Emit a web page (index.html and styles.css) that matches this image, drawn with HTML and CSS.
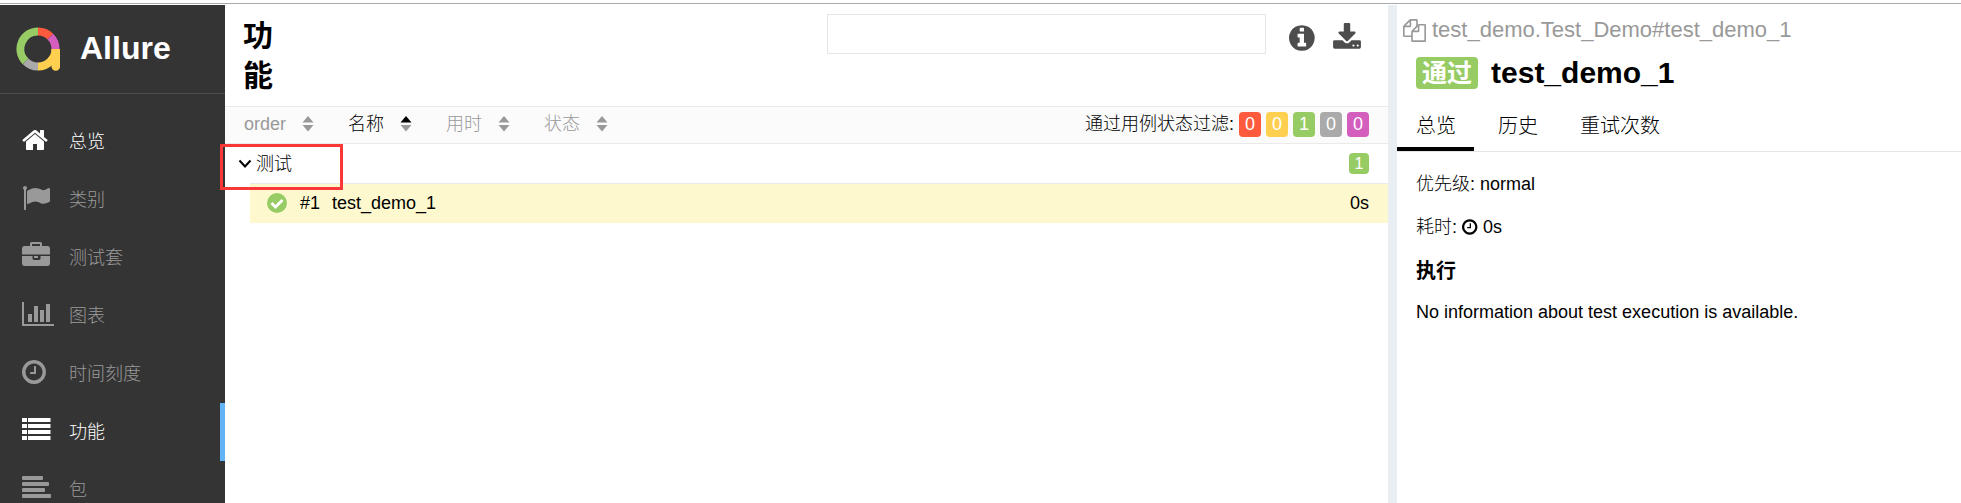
FILE: index.html
```html
<!DOCTYPE html>
<html lang="zh-CN">
<head>
<meta charset="utf-8">
<title>Allure</title>
<link rel="stylesheet" href="styles.css">
</head>
<body>
<svg class="defs" width="0" height="0" aria-hidden="true">
  <symbol id="clock" viewBox="128 0 1792 1792"><path d="M1024 544v448q0 14-9 23t-23 9h-320q-14 0-23-9t-9-23v-64q0-14 9-23t23-9h224v-352q0-14 9-23t23-9h64q14 0 23 9t9 23zm416 352q0-148-73-273t-198-198-273-73-273 73-198 198-73 273 73 273 198 198 273 73 273-73 198-198 73-273zm224 0q0 209-103 385.5t-279.5 279.5-385.5 103-385.5-103-279.5-279.5-103-385.5 103-385.5 279.5-279.5 385.5-103 385.5 103 279.5 279.5 103 385.5z"/></symbol>
  <symbol id="sort" viewBox="0 0 12 16"><path class="sort-up" d="M6 0l5.500 6.500h-11z"/><path d="M6 15.500l5.500-6.500h-11z"/></symbol>
</svg>
<div class="topline"></div>
<div class="app">
  <aside class="side">
    <a class="brand" href="#">
      <svg class="logo" viewBox="0 0 44 44" aria-hidden="true">
        <g fill="none" stroke-width="8">
          <path stroke="#97cc64" d="M9.600 34.400A17.500 17.500 0 0 1 22 4.500"/>
          <path stroke="#fd5a3e" d="M22 4.500A17.500 17.500 0 0 1 34.400 9.600"/>
          <path stroke="#d35ebe" d="M34.400 9.600A17.500 17.500 0 0 1 39.500 22"/>
          <path stroke="#ffd050" d="M39.500 22A17.500 17.500 0 0 1 22 39.500"/>
          <path stroke="#aaa" d="M22 39.500A17.500 17.500 0 0 1 9.600 34.400"/>
        </g>
        <path fill="#ffd050" d="M35.500 22H44V39.500a4 4 0 0 1-8.500 0z"/>
      </svg>
      <span>Allure</span>
    </a>
    <nav class="nav">
      <a class="nav-item lit" href="#"><svg class="nav-icon" viewBox="64 0 1792 1792"><path d="M1472 992v480q0 26-19 45t-45 19h-384v-384h-256v384h-384q-26 0-45-19t-19-45v-480q0-1 .5-3t.5-3l575-474 575 474q1 2 1 6zm223-69l-62 74q-8 9-21 11h-3q-13 0-21-7l-692-577-692 577q-12 8-24 7-13-2-21-11l-62-74q-8-10-7-23.5t11-21.5l719-599q32-26 76-26t76 26l244 204v-195q0-14 9-23t23-9h192q14 0 23 9t9 23v408l219 182q10 8 11 21.5t-7 23.5z"/></svg><span>总览</span></a>
      <a class="nav-item" href="#"><svg class="nav-icon" viewBox="0 0 1792 1792"><path d="M320 256q0 72-64 110v1266q0 13-9.5 22.5t-22.5 9.5h-64q-13 0-22.5-9.5t-9.5-22.5v-1266q-64-38-64-110 0-53 37.5-90.5t90.5-37.5 90.5 37.5 37.5 90.5zm1472 64v763q0 25-12.5 38.5t-39.5 27.5q-215 116-369 116-61 0-123.5-22t-108.5-48-115.5-48-142.5-22q-192 0-464 146-17 9-33 9-26 0-45-19t-19-45v-742q0-32 31-55 21-14 79-43 236-120 421-120 107 0 200 29t219 88q38 19 88 19 54 0 117.5-21t110-47 88-47 54.5-21q26 0 45 19t19 45z"/></svg><span>类别</span></a>
      <a class="nav-item" href="#"><svg class="nav-icon" viewBox="0 0 1792 1792"><path d="M640 256h512v-128h-512v128zm1152 640v480q0 66-47 113t-113 47h-1472q-66 0-113-47t-47-113v-480h672v160q0 40 28 68t68 28h320q40 0 68-28t28-68v-160h672zm-768 0v128h-256v-128h256zm768-480v384h-1792v-384q0-66 47-113t113-47h352v-160q0-40 28-68t68-28h576q40 0 68 28t28 68v160h352q66 0 113 47t47 113z"/></svg><span>测试套</span></a>
      <a class="nav-item" href="#"><svg class="nav-icon" viewBox="0 0 1792 1792"><path d="M640 896v512h-256v-512h256zm384-512v1024h-256v-1024h256zm1024 1152v128h-2048v-1536h128v1408h1920zm-640-896v768h-256v-768h256zm384-384v1152h-256v-1152h256z"/></svg><span>图表</span></a>
      <a class="nav-item" href="#"><svg class="nav-icon"><use href="#clock"/></svg><span>时间刻度</span></a>
      <a class="nav-item lit current" href="#"><svg class="nav-icon" viewBox="0 0 28 28"><path d="M0 2h5v4H0zM6 2h22.500v4H6zM0 8h5v4H0zM6 8h22.500v4H6zM0 14h5v4H0zM6 14h22.500v4H6zM0 20h5v4H0zM6 20h22.500v4H6z"/></svg><span>功能</span></a>
      <a class="nav-item" href="#"><svg class="nav-icon" viewBox="0 0 28 28"><rect y="2" width="21" height="4" rx="1"/><rect y="8" width="27" height="4" rx="1"/><rect y="14" width="23" height="4" rx="1"/><rect y="20" width="29" height="4" rx="1"/></svg><span>包</span></a>
    </nav>
  </aside>

  <main class="tree">
    <header class="tree-head">
      <h1 class="tree-title">功能</h1>
      <div class="tools">
        <input class="search" type="text" aria-label="搜索">
        <button class="tool" type="button" aria-label="信息"><svg viewBox="128 0 1792 1792"><path d="M1152 1376v-160q0-14-9-23t-23-9h-96v-512q0-14-9-23t-23-9h-320q-14 0-23 9t-9 23v160q0 14 9 23t23 9h96v320h-96q-14 0-23 9t-9 23v160q0 14 9 23t23 9h448q14 0 23-9t9-23zm-128-896v-160q0-14-9-23t-23-9h-192q-14 0-23 9t-9 23v160q0 14 9 23t23 9h192q14 0 23-9t9-23zm640 416q0 209-103 385.5t-279.5 279.5-385.5 103-385.5-103-279.5-279.5-103-385.5 103-385.5 279.5-279.5 385.5-103 385.5 103 279.5 279.5 103 385.5z"/></svg></button>
        <button class="tool" type="button" aria-label="下载"><svg viewBox="0 0 1792 1792"><path d="M1344 1344q0-26-19-45t-45-19-45 19-19 45 19 45 45 19 45-19 19-45zm256 0q0-26-19-45t-45-19-45 19-19 45 19 45 45 19 45-19 19-45zm128-224v320q0 40-28 68t-68 28h-1472q-40 0-68-28t-28-68v-320q0-40 28-68t68-28h465l135 136q58 56 136 56t136-56l136-136h464q40 0 68 28t28 68zm-325-569q17 41-14 70l-448 448q-18 19-45 19t-45-19l-448-448q-31-29-14-70 17-39 59-39h256v-448q0-26 19-45t45-19h256q26 0 45 19t19 45v448h256q42 0 59 39z"/></svg></button>
      </div>
    </header>
    <div class="bar">
      <div class="sorters">
        <button class="sorter" type="button">order <svg><use href="#sort"/></svg></button>
        <button class="sorter sorted" type="button">名称 <svg><use href="#sort"/></svg></button>
        <button class="sorter" type="button">用时 <svg><use href="#sort"/></svg></button>
        <button class="sorter" type="button">状态 <svg><use href="#sort"/></svg></button>
      </div>
      <div class="filter">
        <span>通过用例状态过滤:</span>
        <button class="mark failed" type="button">0</button>
        <button class="mark broken" type="button">0</button>
        <button class="mark passed" type="button">1</button>
        <button class="mark skipped" type="button">0</button>
        <button class="mark unknown" type="button">0</button>
      </div>
    </div>
    <div class="group">
      <svg class="chevron" viewBox="0 0 14 10" aria-hidden="true"><path d="M1.500 1.500L7 7.500l5.500-6"/></svg>
      <span class="group-name">测试</span>
      <span class="count passed">1</span>
      <div class="highlight"></div>
    </div>
    <a class="case" href="#">
      <svg class="check" viewBox="0 0 20 20" aria-hidden="true"><circle cx="10" cy="10" r="10" fill="#97cc64"/><path d="M4.500 10l4 4 7-7" fill="none" stroke="#fff" stroke-width="3"/></svg>
      <span class="case-order">#1</span>
      <span>test_demo_1</span>
      <span class="case-time">0s</span>
    </a>
  </main>

  <div class="gutter"></div>

  <section class="detail">
    <div class="fullname">
      <svg viewBox="0 0 1792 1792" aria-hidden="true"><path d="M1696 384q40 0 68 28t28 68v1216q0 40-28 68t-68 28h-960q-40 0-68-28t-28-68v-288h-544q-40 0-68-28t-28-68v-672q0-40 20-88t48-76l408-408q28-28 76-48t88-20h416q40 0 68 28t28 68v328q68-40 128-40h416zm-544 213l-299 299h299v-299zm-640-384l-299 299h299v-299zm196 647l316-316v-416h-384v416q0 40-28 68t-68 28h-416v640h512v-256q0-40 20-88t48-76zm956 804v-1152h-384v416q0 40-28 68t-68 28h-416v640h896z"/></svg>
      <span>test_demo.Test_Demo#test_demo_1</span>
    </div>
    <h2 class="case-title"><span class="status passed">通过</span><span>test_demo_1</span></h2>
    <nav class="tabs">
      <a class="tab active" href="#">总览</a>
      <a class="tab" href="#">历史</a>
      <a class="tab" href="#">重试次数</a>
    </nav>
    <div class="info">
      <p>优先级: normal</p>
      <p>耗时: <svg class="inline-clock"><use href="#clock"/></svg>0s</p>
      <h3>执行</h3>
      <p>No information about test execution is available.</p>
    </div>
  </section>
</div>
</body>
</html>
```
FILE: styles.css
```css
* { box-sizing: border-box; }

body {
  margin: 0;
  height: 100vh;
  display: flex;
  flex-direction: column;
  overflow: hidden;
  background: #fff;
  color: #000;
  font: 300 18px/24px "Liberation Sans", "Noto Sans CJK SC", sans-serif;
}

a { color: inherit; text-decoration: none; }
button { font: inherit; color: inherit; border: 0; padding: 0; background: none; cursor: pointer; }
svg { flex: none; fill: currentColor; }
.defs { position: absolute; }

.topline { flex: none; height: 5px; border-top: 3px solid #fff; background: linear-gradient(#aaa 1px, #fff 1px); }

.app { flex: 1; min-height: 0; display: flex; }

/* Sidebar */
.side { flex: none; width: 225px; background: #343434; color: #999; overflow: hidden; }
.brand {
  display: flex;
  align-items: center;
  gap: 20px;
  height: 89px;
  padding: 0 16px;
  border-bottom: 1px solid #4d4d4d;
  color: #fff;
  font-size: 32px;
  font-weight: bold;
  line-height: 36px;
}
.brand span { padding-bottom: 2px; }
.logo { width: 44px; height: 44px; }
.nav { padding-top: 19px; }
.nav-item { display: flex; align-items: center; gap: 19px; height: 58px; padding: 0 22px 4px; }
.nav-item span { padding-top: 4px; }
.nav-icon { width: 28px; height: 28px; overflow: visible; }
.lit { color: #fff; }
.current { border-right: 5px solid #63b3f7; }

/* Tree of results */
.tree { flex: 1163 1 0; min-width: 0; }
.tree-head { display: flex; justify-content: space-between; padding: 9px 26px 10px 18px; }
.tree-title { width: 30px; margin: 0; padding-top: 2px; font-size: 30px; line-height: 40px; }
.tools { flex: 0 1 535px; display: flex; align-items: flex-start; gap: 13px; }
.search { flex: 1; min-width: 0; height: 40px; margin-right: 10px; padding: 0 10px; border: 1px solid #e5e5e5; font: inherit; }
.tool { padding-top: 9px; color: #4d4d4d; }
.tool svg { display: block; width: 30px; height: 30px; }

.bar {
  display: flex;
  align-items: center;
  justify-content: space-between;
  height: 38px;
  padding: 0 19px 2px;
  border-top: 1px solid #eaeaea;
  border-bottom: 1px solid #eaeaea;
  background: #fbfbfb;
}
.sorters { display: flex; gap: 34px; }
.sorter { display: flex; align-items: center; gap: 16px; color: #999; }
.sorter svg { width: 12px; height: 16px; }
.sorted { --up: #000; color: #000; }
.sorted svg { color: #999; }
.sort-up { fill: var(--up, currentColor); }
.filter { display: flex; align-items: center; gap: 5px; }
.mark { width: 22px; height: 25px; border-radius: 4px; color: #fff; }
.failed { background: #fd5a3e; }
.broken { background: #ffd050; }
.passed { background: #97cc64; }
.skipped { background: #aaa; }
.unknown { background: #d35ebe; }

.group { position: relative; display: flex; align-items: center; height: 39px; padding: 0 19px 0 13px; }
.chevron { width: 14px; height: 10px; fill: none; stroke: #000; stroke-width: 2; }
.group-name { margin-left: 4px; }
.count { margin-left: auto; width: 20px; height: 21px; border-radius: 4px; color: #fff; font-size: 16px; line-height: 21px; text-align: center; }
.highlight { position: absolute; z-index: 1; top: 0; left: -5px; width: 123px; height: 46px; border: 3px solid #fb3838; }

.case {
  display: flex;
  align-items: center;
  height: 40px;
  margin-left: 25px;
  padding: 0 19px 2px 17px;
  border-top: 1px solid #eaeaea;
  background: #fef8ce;
}
.check { width: 20px; height: 20px; }
.case-order { margin: 0 12px 0 13px; }
.case-time { margin-left: auto; }

.gutter { flex: none; width: 9px; background: #e9eef2; }

/* Detail pane */
.detail { flex: 564 1 0; min-width: 0; }
.fullname { display: flex; align-items: center; gap: 6px; padding: 13px 6px 0; color: #999; font-size: 22px; line-height: 24px; }
.fullname svg { width: 23px; height: 23px; }
.case-title { display: flex; align-items: center; gap: 13px; margin: 13px 19px 0; font-size: 30px; line-height: 36px; }
.status { padding: 0 6px; border-radius: 4px; color: #fff; font-size: 25px; line-height: 32px; }
.tabs { display: flex; gap: 5px; margin-top: 14px; border-bottom: 1px solid #e5e5e5; font-size: 20px; line-height: 24px; }
.tab { padding: 9px 18px 9px 19px; border-bottom: 4px solid transparent; }
.active { border-color: #000; }
.info { padding: 20px 19px; }
.info p { margin: 0 0 19px; }
.info h3 { margin: 0 0 16px; font-size: 20px; line-height: 26px; }
.inline-clock { width: 18px; height: 18px; margin-right: 3px; vertical-align: -3px; }
```
